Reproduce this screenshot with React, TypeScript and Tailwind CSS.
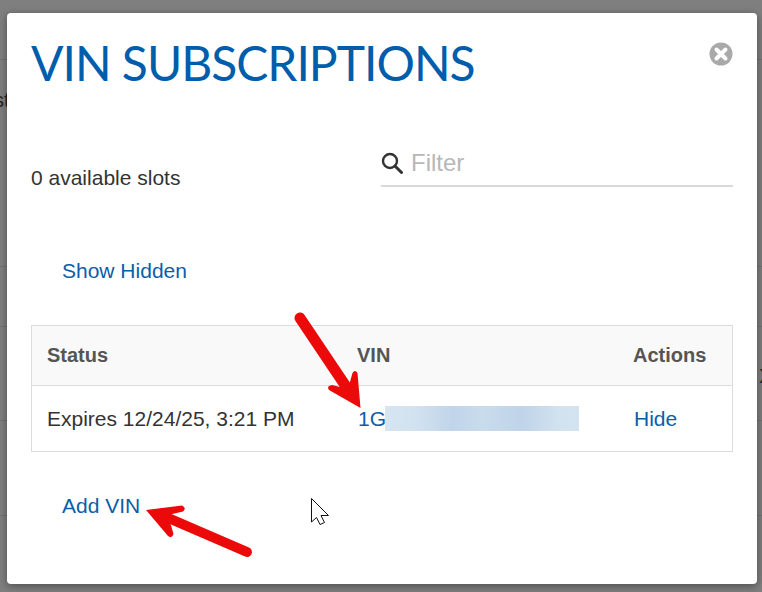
const linkClass = "text-[21px] leading-[24px] text-[#0a5ea8]";

function CloseIcon() {
  return (
    <svg width="24" height="24" viewBox="0 0 24 24" className="block">
      <circle cx="12" cy="12" r="11.5" fill="#a9a9a9" />
      <path d="M7.5 7.5 16.5 16.5M16.5 7.5 7.5 16.5" stroke="#fff" strokeWidth="4" strokeLinecap="round" />
    </svg>
  );
}

function SearchIcon() {
  return (
    <svg width="22" height="22" viewBox="0 0 22 22" className="block">
      <circle cx="9" cy="9" r="7" fill="none" stroke="#333" strokeWidth="2.4" />
      <path d="M14 14 20.5 20.5" stroke="#333" strokeWidth="3" strokeLinecap="round" />
    </svg>
  );
}

function Arrows() {
  return (
    <svg width="762" height="592" viewBox="0 0 762 592" className="absolute left-0 top-0 pointer-events-none">
      <g fill="#ec0909" stroke="none">
        <path d="M300 318 351 394" fill="none" stroke="#ec0909" strokeWidth="11" strokeLinecap="round" />
        <path d="M360.5 408 357.5 373Q355 369 352.5 373L348 389 332 385Q326 386 329 390Z" />
        <path d="M247 552 166 517" fill="none" stroke="#ec0909" strokeWidth="10" strokeLinecap="round" />
        <path d="M146 510 182 505.5Q187 508 183 511.5L168 515 173.5 534Q172 539 168 536Z" />
      </g>
      <path
        d="M311.5 498.5V522L316.5 517.5 320 524.5 324.5 522.5 321 515.5H328.5Z"
        fill="#fff"
        stroke="#111"
        strokeWidth="1"
      />
    </svg>
  );
}

export default function App() {
  return (
    <div className="relative h-[592px] w-[762px] overflow-hidden bg-[#7f7f7f] pl-[7px] pt-[13px] font-['Liberation_Sans',Arial,sans-serif]">
      <div className="absolute left-0 top-[59px] h-px w-full bg-[#727272]" />
      <div className="absolute left-0 top-[266px] h-px w-full bg-[#727272]" />
      <div className="absolute left-0 top-[326px] h-px w-full bg-[#727272]" />
      <div className="absolute left-0 top-[420px] h-px w-full bg-[#727272]" />
      <div className="absolute left-0 top-[515px] h-px w-full bg-[#727272]" />
      <span className="absolute left-[-6px] top-[88px] text-[20px] leading-[24px] text-[#222]">st</span>
      <span className="absolute left-[759px] top-[364px] text-[20px] leading-[24px] text-[#222]">X</span>

      <div className="relative flex h-[571px] w-[750px] flex-col rounded-[4px] bg-white pl-[24px] pr-[24px] shadow-[0_2px_8px_rgba(0,0,0,0.4)]">
        <div className="flex items-start justify-between pt-[23px]">
          <h1 className="text-[48px] font-normal leading-[54px] tracking-[-1px] text-[#005dab] font-['Lato',sans-serif]">
            VIN SUBSCRIPTIONS
          </h1>
          <button className="mt-[6px]">
            <CloseIcon />
          </button>
        </div>

        <div className="mt-[57px] flex items-end justify-between">
          <p className="-mb-[3px] text-[21px] leading-[24px] text-[#333]">0 available slots</p>
          <div className="flex h-[40px] w-[352px] items-center gap-[8px] border-b-2 border-[#d9d9d9] pb-[6px]">
            <SearchIcon />
            <span className="text-[24px] leading-[28px] text-[#b7b7b7]">Filter</span>
          </div>
        </div>

        <div className="mt-[72px] pl-[31px]">
          <a className={linkClass}>Show Hidden</a>
        </div>

        <div className="mt-[40px] w-[702px] border border-[#dcdcdc]">
          <div className="flex h-[60px] items-center border-b border-[#dcdcdc] bg-[#f9f9f9] pb-[2px] pl-[15px] text-[20px] font-bold leading-[24px] text-[#555]">
            <span className="w-[310px]">Status</span>
            <span className="w-[276px]">VIN</span>
            <span>Actions</span>
          </div>
          <div className="flex h-[65px] items-center pl-[15px] text-[21px] leading-[24px] text-[#333]">
            <span className="w-[311px]">Expires 12/24/25, 3:21 PM</span>
            <span className="flex w-[276px] items-center">
              <a className={`${linkClass} w-[27px]`}>1G</a>
              <span className="h-[25px] w-[194px] bg-[linear-gradient(90deg,#d6e5f1_0%,#d3e2f0_15%,#c0d5ea_35%,#c9dcec_50%,#bfd4e9_70%,#d2e2ef_90%,#d3e3f0_100%)]" />
            </span>
            <a className={linkClass}>Hide</a>
          </div>
        </div>

        <div className="mt-[42px] pl-[31px]">
          <a className={linkClass}>Add VIN</a>
        </div>
      </div>

      <Arrows />
    </div>
  );
}
